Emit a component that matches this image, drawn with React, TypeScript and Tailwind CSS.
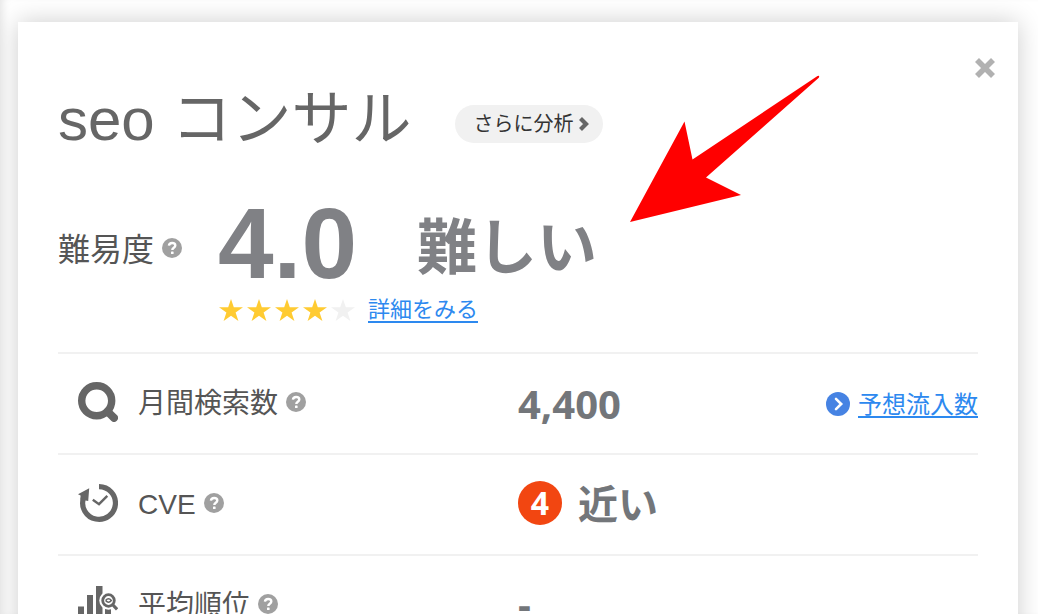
import type { ReactNode } from 'react';

const HelpIcon = () => (
  <svg viewBox="0 0 20 20" className="size-5 shrink-0" aria-hidden="true">
    <circle cx="10" cy="10" r="10" fill="#a0a0a0" />
    <path d="M6.9 7.6C7.2 5.8 8.4 5 10.1 5c1.9 0 3.2 1 3.2 2.5 0 2.3-3 2.1-3 4.4" fill="none" stroke="#fff" strokeWidth="2.4" />
    <rect x="9" y="13.4" width="2.6" height="2.6" rx="0.6" fill="#fff" />
  </svg>
);

const SearchIcon = () => (
  <svg viewBox="0 0 40 40" className="size-10 shrink-0" aria-hidden="true">
    <circle cx="18.7" cy="18.7" r="15" fill="none" stroke="#666" strokeWidth="7.4" />
    <path d="M29.5 29.5l6.5 6.4" stroke="#666" strokeWidth="8" strokeLinecap="round" />
  </svg>
);

const HistoryIcon = () => (
  <svg viewBox="0 0 40 40" className="size-10 shrink-0" aria-hidden="true">
    <path d="M21 3.6a16.4 16.4 0 1 1-15.6 11.5" fill="none" stroke="#666" strokeWidth="5.2" />
    <path d="M0 11.2L11.2 5.2 10.2 18 2.4 16.5 2.6 12.6z" fill="#666" />
    <path d="M14.8 16.8l6.2 4.4 8.3-8.4" fill="none" stroke="#666" strokeWidth="2.4" />
  </svg>
);

const RankIcon = () => (
  <svg viewBox="0 0 40 40" className="size-10 shrink-0" aria-hidden="true">
    <path d="M0 22.500h6V40H0zM9 11h6v29H9zM18 2h6.500v38H18zM27 22h6v18h-6z" fill="#666" />
    <circle cx="30.5" cy="16.5" r="9.2" fill="#fff" />
    <circle cx="30.5" cy="16.5" r="5.8" fill="none" stroke="#666" strokeWidth="2.8" />
    <path d="M27.600 16.500q2.900-3.500 5.800 0q-2.900 3.500-5.800 0" fill="#fff" stroke="#666" strokeWidth="1.4" />
    <path d="M34.5 20.500l4.600 4.800" stroke="#666" strokeWidth="3.2" />
  </svg>
);

const Star = ({ filled }: { filled: boolean }) => (
  <svg viewBox="0 0 24 22" className="h-[22px] w-6" aria-hidden="true">
    <path d="M12 0l2.8 8.3H24l-7.4 5.3L19.4 22 12 16.8 4.6 22l2.8-8.4L0 8.3h9.2z" fill={filled ? '#ffcb32' : '#f1f1f1'} />
  </svg>
);

type MetricRowProps = {
  icon: ReactNode;
  label: string;
  children: ReactNode;
};

const MetricRow = ({ icon, label, children }: MetricRowProps) => (
  <div className="grid h-[101px] grid-cols-2 items-center border-t-2 border-[#f1f1f1] pb-[3px] pl-5">
    <div className="flex items-center">
      {icon}
      <span className="ml-5 pt-1 text-[28px] leading-10 text-[#555]">{label}</span>
      <span className="ml-2">
        <HelpIcon />
      </span>
    </div>
    <div className="-ml-[10px] flex items-center text-[40px] leading-10 font-bold text-[#73767a]">{children}</div>
  </div>
);

export default function App() {
  return (
    <div className="h-screen overflow-hidden bg-white pt-[22px] pr-5 pl-[18px] font-['Liberation_Sans','Noto_Sans_CJK_JP',sans-serif] shadow-[inset_8px_0_10px_-6px_rgba(0,0,0,0.12)]">
      <main className="relative h-[800px] bg-white px-10 pt-[60px] shadow-[0_0_24px_rgba(0,0,0,0.2)]">
        <button type="button" aria-label="閉じる" className="absolute top-[35px] right-[22px]">
          <svg viewBox="0 0 22 22" className="size-[22px]" aria-hidden="true">
            <path d="M3 3l16 16M19 3L3 19" stroke="#b1b1b1" strokeWidth="5.6" />
          </svg>
        </button>

        <header className="flex h-[72px] items-center">
          <h1 className="pt-1 text-[60px] leading-[72px] text-[#666]">seo コンサル</h1>
          <button type="button" className="mt-[11px] ml-11 flex h-[38px] items-center rounded-full bg-[#f1f1f1] pr-3 pl-[18px] text-xl text-[#333]">
            さらに分析
            <svg viewBox="0 0 12 16" className="ml-[6px] h-4 w-3" aria-hidden="true">
              <path d="M1.500 2.500L7 8l-5.500 5.500" fill="none" stroke="#666" strokeWidth="4.200" />
            </svg>
          </button>
        </header>

        <section className="flex h-[198px] pt-[39px]">
          <div className="flex h-[110px] w-40 items-center gap-2 text-[32px] leading-[60px] text-[#555]">
            <span className="pt-1">難易度</span>
            <HelpIcon />
          </div>
          <div>
            <div className="flex h-[100px] items-center font-bold text-[#808185]">
              <span className="text-[100px] leading-[100px]">4.0</span>
              <span className="ml-[60px] pt-3 text-[60px] leading-[60px]">難しい</span>
            </div>
            <div className="flex items-center pt-[3px]">
              <div role="img" aria-label="4.0 / 5" className="flex gap-1 pl-px">
                {[1, 2, 3, 4, 5].map((n) => (
                  <Star key={n} filled={n <= 4} />
                ))}
              </div>
              <a href="#detail" className="ml-[13px] border-b-2 border-[#2d89ef] pt-[3px] text-[22px] leading-[22px] text-[#2d89ef]">
                詳細をみる
              </a>
            </div>
          </div>
        </section>

        <MetricRow icon={<SearchIcon />} label="月間検索数">
          <span className="pt-1 font-['Open_Sans',sans-serif]">4,400</span>
          <a href="#traffic" className="ml-auto flex items-center gap-2 pt-1 text-2xl font-normal text-[#2d89ef]">
            <svg viewBox="0 0 24 24" className="size-6" aria-hidden="true">
              <circle cx="12" cy="12" r="12" fill="#4683e3" />
              <path d="M10 6.8l5.2 5.2-5.2 5.2" fill="none" stroke="#fff" strokeWidth="2.6" strokeLinecap="round" />
            </svg>
            <span className="border-b-2 border-[#2d89ef] pt-[3px] leading-[22px]">予想流入数</span>
          </a>
        </MetricRow>
        <MetricRow icon={<HistoryIcon />} label="CVE">
          <span className="flex size-11 items-center justify-center rounded-full bg-[#f24611] font-['Open_Sans',sans-serif] text-[32px] text-white">4</span>
          <span className="ml-4 pt-1">近い</span>
        </MetricRow>
        <MetricRow icon={<RankIcon />} label="平均順位">
          <span className="font-['Open_Sans',sans-serif]">-</span>
        </MetricRow>

        <svg viewBox="0 0 190 147" className="absolute top-[53px] left-[612px] h-[147px] w-[190px]" aria-hidden="true">
          <path d="M0 147L54.500 46.500 62.500 84.500 187.500 1Q190 0 188.800 2.800L76 102.500 111 120z" fill="#f00" />
        </svg>
      </main>
    </div>
  );
}
